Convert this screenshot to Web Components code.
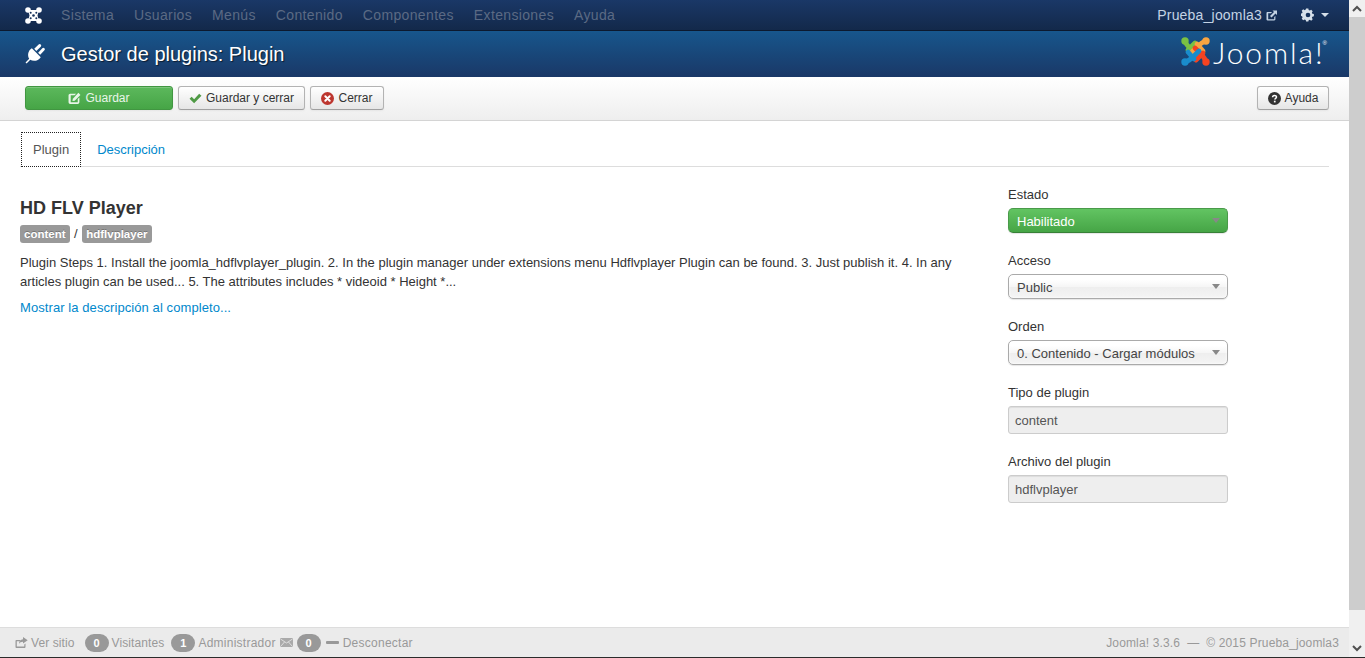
<!DOCTYPE html>
<html lang="es">
<head>
<meta charset="utf-8">
<title>Gestor de plugins: Plugin</title>
<style>
  html,body{margin:0;height:100%;overflow:hidden;background:#2b2b2b;}
  body{font-family:"Liberation Sans",Arial,sans-serif;font-size:13px;color:#333;}
  #page{display:flex;height:657px;background:#fff;}
  #main{flex:1;min-width:0;display:flex;flex-direction:column;}
  plugin-form{flex:1;min-height:0;}
</style>
</head>
<body>
<div id="page">
  <div id="main">
    <admin-navbar></admin-navbar>
    <page-header>Gestor de plugins: Plugin</page-header>
    <action-toolbar></action-toolbar>
    <plugin-form></plugin-form>
    <status-footer></status-footer>
  </div>
  <fake-scrollbar></fake-scrollbar>
</div>

<script>
const icons = {
  joomla: `<svg width="17" height="17" viewBox="0 0 17 17"><g fill="#fff"><circle cx="3" cy="3" r="2.8"/><circle cx="14" cy="3" r="2.8"/><circle cx="3" cy="14" r="2.8"/><circle cx="14" cy="14" r="2.8"/><path d="M3 3h11L12.5 8.500 14 14H3L4.500 8.500z"/></g><g fill="#14305a"><circle cx="8.500" cy="8.500" r="1.300"/><circle cx="5.700" cy="5.700" r="1"/><circle cx="11.300" cy="5.700" r="1"/><circle cx="5.700" cy="11.300" r="1"/><circle cx="11.300" cy="11.300" r="1"/></g></svg>`,
  plug: `<svg width="21" height="21" viewBox="0 0 20 20" fill="#fff"><path d="M6.500 5L15 13.500C13 17 8 18 5 16L1.500 19.500.5 18.500 4 15C2 12 3 7 6.500 5z"/><path d="M8.800 5.500L13 1.500a1.400 1.400 0 0 1 2 2L10.800 7.500zM12.500 9.200L16.500 5a1.400 1.400 0 0 1 2 2L14.500 11.200z"/></svg>`,
  edit: `<svg width="13" height="13" viewBox="0 0 12 12"><path d="M2 1.500h5.500L6 3H2.500v6.500H9V6.500l1.500-1.500v4.500c0 .8-.7 1.500-1.500 1.500H2c-.8 0-1.500-.7-1.500-1.500V3c0-.8.700-1.500 1.500-1.500z" fill="currentColor"/><path d="M4.500 6.200L9.600.8l1.900 1.900-5.300 5.300-2.100.4z" fill="currentColor"/></svg>`,
  check: `<svg width="13" height="11" viewBox="0 0 14 12"><path d="M.5 6.300l2.300-2.300 2.700 2.700L11 .8l2.500 2.300-8 8.200z" fill="#4f9a45"/></svg>`,
  close: `<svg width="13" height="13" viewBox="0 0 13 13"><circle cx="6.500" cy="6.500" r="6.500" fill="#bd362f"/><path d="M4.300 4.300l4.400 4.400M8.700 4.300L4.300 8.700" stroke="#fff" stroke-width="2" stroke-linecap="round"/></svg>`,
  help: `<svg width="13" height="13" viewBox="0 0 13 13"><circle cx="6.500" cy="6.500" r="6.500" fill="#333"/><path d="M4.600 5.200c0-2.300 3.900-2.300 3.900-.2 0 1.300-1.700 1.300-1.700 2.600" fill="none" stroke="#fff" stroke-width="1.500"/><rect x="5.900" y="8.700" width="1.700" height="1.700" fill="#fff"/></svg>`,
  external: `<svg width="12" height="11" viewBox="0 0 12 11"><path d="M1.500 2H6L5 3.200H2.200v6h6V7l1.200-1v3.300c0 .6-.5 1.200-1.200 1.200H1.500C.8 10.500.5 10 .5 9.300V3.200C.5 2.500.8 2 1.500 2z" fill="currentColor"/><path d="M6.500.5H11v4.500L9.500 3.500 5.500 7.500 4 6l4-4z" fill="currentColor"/></svg>`,
  gear: `<svg width="14" height="14" viewBox="0 0 15 15"><path d="M6 0h3l.4 2 1.500.7 1.800-1.100 2 2-1.100 1.800.6 1.500 2 .4v3l-2 .4-.6 1.500 1.100 1.800-2 2-1.800-1.100-1.500.6L9 17H6l-.4-2-1.500-.6-1.800 1.100-2-2 1.100-1.800L.8 10.200l-2-.4v-3l2-.4.6-1.500-1.100-1.800 2-2 1.800 1.100 1.500-.7z" transform="translate(.5 .5) scale(.82)" fill="#d5dfe9"/><circle cx="7.500" cy="7.500" r="2.500" fill="#14305a"/></svg>`,
  share: `<svg width="13" height="11" viewBox="0 0 13 11"><path d="M1.500 3H5v1.200H1.800v5.300h7.500V7.500l1.200-1v3.500c0 .5-.4 1-1 1h-8c-.6 0-1-.5-1-1V4c0-.6.400-1 1-1z" fill="#999"/><path d="M8 0l4.700 3.300L8 6.600V4.700C6 4.700 4.800 5.500 4 7c0-3 1.500-4.600 4-4.800z" fill="#999"/></svg>`,
  mail: `<svg width="13" height="9" viewBox="0 0 13 9"><rect width="13" height="9" rx="1" fill="#aaa"/><path d="M.5 1l6 4 6-4M.5 8.500l4-4.500M12.500 8.500l-4-4.500" stroke="#ebebeb" stroke-width=".8" fill="none"/></svg>`
};

function define(name, render, css){
  customElements.define(name, class extends HTMLElement {
    constructor(){
      super();
      this.attachShadow({mode:'open'});
    }
    connectedCallback(){
      this.shadowRoot.innerHTML = `<style>${css}</style>${render(this)}`;
    }
  });
}

define('admin-navbar', () => `
  <span class="brand">${icons.joomla}</span>
  <nav>${["Sistema","Usuarios","Menús","Contenido","Componentes","Extensiones","Ayuda"].map(m => `<span>${m}</span>`).join("")}</nav>
  <div class="right">
    <span class="site">Prueba_joomla3 ${icons.external}</span>
    <span class="gear">${icons.gear}<i></i></span>
  </div>`, `
  :host{display:flex;align-items:center;height:30px;box-sizing:content-box;background:linear-gradient(#1a3867,#13294a);border-bottom:1px solid #0c192e;font-size:14px;letter-spacing:.35px;color:#5b6a84;}
  .brand{margin-left:25px;width:36px;display:flex;}
  nav{display:flex;gap:20px;}
  .right{margin-left:auto;display:flex;align-items:center;padding-right:20px;}
  .site{color:#c4d3e4;display:flex;align-items:center;gap:4px;letter-spacing:.2px;}
  .gear{margin-left:23px;display:flex;align-items:center;gap:6px;}
  i{border-top:4px solid #d5dfe9;border-left:4px solid transparent;border-right:4px solid transparent;}
`);

define('page-header', () => `
  <span class="icon">${icons.plug}</span>
  <h1><slot></slot></h1>
  <div class="logo">
    <svg width="31" height="31" viewBox="0 0 31 31" fill="none" stroke-width="4.800" stroke-linecap="round">
      <path d="M5 5c1 4 4 6 7 9l5 5" stroke="#7ac143"/><circle cx="5" cy="5" r="3.700" fill="#7ac143"/>
      <path d="M8 14l7-7" stroke="#7ac143"/>
      <path d="M26 5c-4 1-6 3-9 6l-5 5" stroke="#f9a541"/><circle cx="26" cy="5" r="3.700" fill="#f9a541"/>
      <path d="M17 8l6 7" stroke="#f9a541"/>
      <path d="M26 26c-1-4-3-6-6-9l-5-5" stroke="#f44321"/><circle cx="26" cy="26" r="3.700" fill="#f44321"/>
      <path d="M23 17l-7 7" stroke="#f44321"/>
      <path d="M5 26c4-1 6-3 9-6l5-5" stroke="#1a8ccc"/><circle cx="5" cy="26" r="3.700" fill="#1a8ccc"/>
      <path d="M14 23l-6-7" stroke="#1a8ccc"/>
    </svg>
    <span class="word">Joomla<span class="bang">!</span></span><sup>®</sup>
  </div>`, `
  :host{display:flex;align-items:center;height:46px;background:linear-gradient(#17568c,#1a3867);color:#fff;}
  .icon{margin-left:25px;width:36px;display:flex;margin-top:-2px;}
  h1{margin:0;font-size:20px;font-weight:400;line-height:24px;text-shadow:1px 1px 1px rgba(0,0,0,.6);}
  .logo{margin-left:auto;margin-right:22px;display:flex;align-items:center;margin-top:-5px;}
  .word{font-family:Lato,"Open Sans",sans-serif;font-weight:300;font-size:30px;letter-spacing:1.900px;margin-left:2px;line-height:30px;}
  .bang{letter-spacing:0;}
  sup{font-size:6px;align-self:flex-start;margin-top:4px;}
`);

define('tool-button', el => `<slot></slot>`, `
  :host{display:inline-flex;align-items:center;justify-content:center;gap:4px;box-sizing:border-box;height:24px;padding:0 9px;border:1px solid #b3b3b3;border-bottom-color:#a0a0a0;border-radius:3px;background:linear-gradient(#fff,#e6e6e6);box-shadow:inset 0 1px 0 rgba(255,255,255,.2),0 1px 2px rgba(0,0,0,.05);font-size:12px;color:#333;}
  :host([primary]){background:linear-gradient(#5cb85c,#46a546);border-color:#419641;color:#e9f5e9;}
`);

define('action-toolbar', () => `
  <div class="left">
    <tool-button primary style="width:148px">${icons.edit}Guardar</tool-button>
    <tool-button style="width:127px">${icons.check}Guardar y cerrar</tool-button>
    <tool-button style="width:74px">${icons.close}Cerrar</tool-button>
  </div>
  <tool-button style="width:72px">${icons.help}Ayuda</tool-button>`, `
  :host{display:flex;justify-content:space-between;align-items:flex-start;box-sizing:border-box;height:44px;padding:9px 20px 0 25px;background:linear-gradient(#fff,#eee);border-bottom:1px solid #d4d4d4;}
  .left{display:flex;gap:5px;}
`);

define('side-select', el => `<span>${el.getAttribute('value')}</span><i></i>`, `
  :host{display:flex;align-items:center;justify-content:space-between;box-sizing:border-box;height:25px;padding:2px 7px 0 8px;border:1px solid #aaa;border-radius:5px;background:linear-gradient(#fff 20%,#f6f6f6 50%,#eee 52%,#f4f4f4);box-shadow:inset 0 0 3px #fff,0 1px 1px rgba(0,0,0,.1);color:#444;font-size:13px;}
  :host([success]){background:linear-gradient(#62c462,#46a546);border-color:#4a9a4a;border-bottom-color:#378137;box-shadow:0 1px 1px rgba(0,0,0,.1);color:#fff;}
  i{border-top:5px solid #888;border-left:4.500px solid transparent;border-right:4.500px solid transparent;margin-top:-3px;}
`);

define('side-field', el => `<label>${el.getAttribute('label')}</label><slot></slot>`, `
  :host{display:block;margin-bottom:18px;}
  label{display:block;box-sizing:border-box;height:18px;padding-top:1px;line-height:18px;margin-bottom:5px;font-size:13px;color:#333;}
`);

define('read-only-input', el => `${el.getAttribute('value')}`, `
  :host{display:flex;align-items:center;box-sizing:border-box;height:28px;padding:1px 6px 0;border:1px solid #ccc;border-radius:3px;background:#eee;box-shadow:inset 0 1px 1px rgba(0,0,0,.075);color:#555;font-size:13px;}
`);

define('tag-label', () => `<slot></slot>`, `
  :host{display:inline-block;box-sizing:border-box;height:18px;line-height:18px;padding:0 4px;border-radius:3px;background:#999;color:#fff;font-size:11.500px;font-weight:bold;text-shadow:0 -1px 0 rgba(0,0,0,.25);}
`);

define('plugin-form', () => `
  <div class="tabs"><span class="tab active">Plugin</span><span class="tab">Descripción</span></div>
  <div class="cols">
    <section>
      <h2>HD FLV Player</h2>
      <div class="tags"><tag-label>content</tag-label> <span class="slash">/</span> <tag-label>hdflvplayer</tag-label></div>
      <p>Plugin Steps 1. Install the joomla_hdflvplayer_plugin. 2. In the plugin manager under extensions menu Hdflvplayer Plugin can be found. 3. Just publish it. 4. In any articles plugin can be used... 5. The attributes includes * videoid * Height *...</p>
      <a>Mostrar la descripción al completo...</a>
    </section>
    <aside>
      <side-field label="Estado"><side-select success value="Habilitado"></side-select></side-field>
      <side-field label="Acceso"><side-select value="Public"></side-select></side-field>
      <side-field label="Orden"><side-select value="0. Contenido - Cargar módulos"></side-select></side-field>
      <side-field label="Tipo de plugin"><read-only-input value="content"></read-only-input></side-field>
      <side-field label="Archivo del plugin"><read-only-input value="hdflvplayer"></read-only-input></side-field>
    </aside>
  </div>`, `
  :host{display:block;padding:11px 20px 0 20px;font-size:13px;line-height:18px;color:#333;}
  .tabs{display:flex;height:35px;box-sizing:border-box;border-bottom:1px solid #ddd;margin-bottom:18px;}
  .tab{box-sizing:border-box;height:35px;padding:0 12px;margin-left:1px;line-height:35px;color:#08c;}
  .tab + .tab{margin-left:4px;}
  .tab.active{color:#555;border:1px dotted #222;padding:0 11px;line-height:33px;background:#fff;}
  .cols{display:grid;grid-template-columns:988px 220px;}
  h2{margin:12px 0 0;font-size:18px;line-height:22px;font-weight:bold;color:#333;}
  .tags{margin-top:6px;height:18px;line-height:18px;display:flex;gap:4.500px;}
  .slash{color:#333;}
  p{margin:10px 0 0;width:945px;line-height:19px;}
  a{display:block;margin-top:8px;color:#08c;letter-spacing:.08px;}
`);

define('count-badge', () => `<slot></slot>`, `
  :host{display:inline-block;box-sizing:border-box;min-width:24px;height:18px;line-height:18px;text-align:center;border-radius:9px;background:#999;color:#fff;font-size:11px;font-weight:bold;}
`);

define('status-footer', () => `
  <div class="left">
    ${icons.share}<span class="t" style="margin-left:3px">Ver sitio</span>
    <count-badge style="margin-left:10px">0</count-badge><span class="t" style="margin-left:3px">Visitantes</span>
    <count-badge style="margin-left:7px">1</count-badge><span class="t" style="margin-left:3px;letter-spacing:.25px">Administrador</span>
    <span class="m">${icons.mail}</span>
    <count-badge style="margin-left:4px">0</count-badge>
    <i></i><span class="t" style="letter-spacing:.25px">Desconectar</span>
  </div>
  <div class="copy" style="letter-spacing:.15px">Joomla! 3.3.6 &nbsp;— &nbsp;© 2015 Prueba_joomla3</div>`, `
  :host{display:flex;align-items:center;justify-content:space-between;box-sizing:border-box;height:30px;padding:0 10px 0 15px;background:#ebebeb;border-top:1px solid #ddd;color:#999;font-size:12px;letter-spacing:.1px;}
  .left{display:flex;align-items:center;}
  .t{margin-left:4px;}
  .m{margin-left:4px;display:flex;}
  i{display:block;width:13px;height:3px;border-radius:1px;background:#999;margin-left:5px;}
`);

define('fake-scrollbar', () => `
  <div class="btn"><svg width="10" height="7" viewBox="0 0 10 7"><path d="M1 6l4-4 4 4" fill="none" stroke="#505050" stroke-width="2"/></svg></div>
  <div class="thumb"></div>
  <div class="rest"></div>
  <div class="btn"><svg width="10" height="7" viewBox="0 0 10 7"><path d="M1 1l4 4 4-4" fill="none" stroke="#505050" stroke-width="2"/></svg></div>`, `
  :host{display:flex;flex-direction:column;width:16px;background:#f0f0f0;}
  .btn{height:17px;display:flex;align-items:center;justify-content:center;}
  .thumb{height:593px;background:#cdcdcd;}
  .rest{flex:1;}
`);
</script>
</body>
</html>
